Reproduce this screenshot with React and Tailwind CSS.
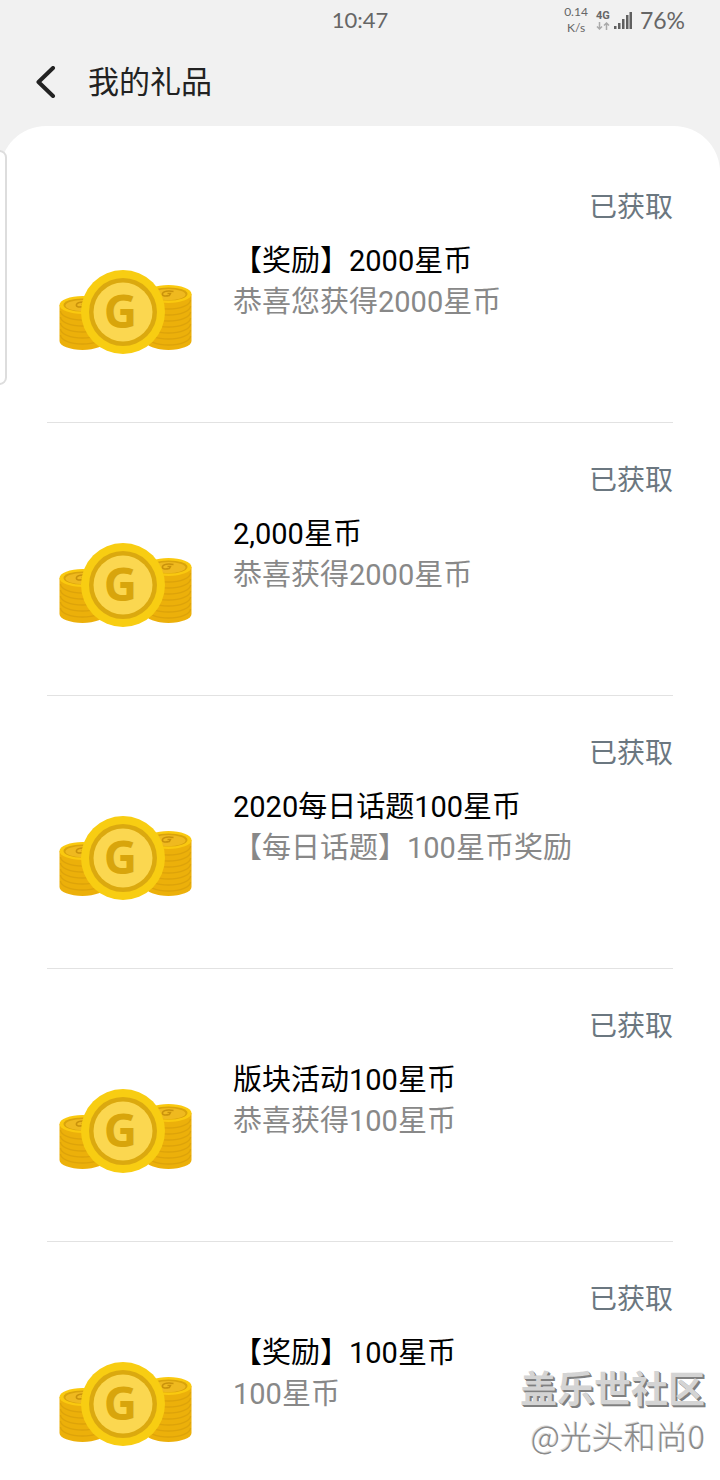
const gifts = [
  { title: '【奖励】2000星币', note: '恭喜您获得2000星币' },
  { title: '2,000星币', note: '恭喜获得2000星币' },
  { title: '2020每日话题100星币', note: '【每日话题】100星币奖励' },
  { title: '版块活动100星币', note: '恭喜获得100星币' },
  { title: '【奖励】100星币', note: '100星币' },
];

function Stack({ cx, top, bottom, lines }) {
  const l = cx - 23;
  const r = cx + 23;
  return (
    <g>
      <path d={`M${l} ${top}V${bottom}A23 9 0 0 0 ${r} ${bottom}V${top}Z`} fill="#ecb00a" />
      {lines.map((y) => (
        <path key={y} d={`M${l + 1} ${y}A22 9 0 0 0 ${r - 1} ${y}`} fill="none" stroke="#dda30a" strokeWidth="1.3" />
      ))}
      <ellipse cx={cx} cy={top} rx="23" ry="9" fill="#fac90f" />
      <ellipse cx={cx} cy={top} rx="19" ry="6.6" fill="#d9a30c" />
      <ellipse cx={cx} cy={top + 0.6} rx="17" ry="5.6" fill="#efb91f" />
      <path
        d={`M${cx + 5} ${top - 2.6}q-9 -1.4 -11 2q-1 3.600 7 2l1 -2h-3`}
        fill="none"
        stroke="#c9920b"
        strokeWidth="1.5"
      />
    </g>
  );
}

function Coins() {
  return (
    <svg className="h-[84px] w-[134px] shrink-0" viewBox="0 0 134 84" aria-hidden="true">
      <Stack cx={23.500} top={35} bottom={71} lines={[41, 47, 53, 59, 65]} />
      <Stack cx={109.500} top={24} bottom={71} lines={[30, 36, 42, 48, 54, 60, 66]} />
      <circle cx="64" cy="42" r="42" fill="#f8cd12" />
      <circle cx="64" cy="42" r="34" fill="#dba90f" />
      <circle cx="64" cy="42" r="29.500" fill="#fbd750" />
      <text x="61.500" y="58" textAnchor="middle" className="fill-[#d8a50c] font-['Open_Sans',sans-serif] text-[46px] font-bold">
        G
      </text>
    </svg>
  );
}

function StatusBar() {
  return (
    <div className="grid h-10 grid-cols-[1fr_auto_1fr] items-center px-[35px] font-['Lato',sans-serif] text-[#666666]">
      <span className="col-start-2 text-center text-[22px] leading-10">10:47</span>
      <div className="flex items-center justify-end gap-2">
        <div className="text-center text-[12px] leading-4">
          <div>0.14</div>
          <div>K/s</div>
        </div>
        <div className="flex items-center gap-1">
          <div className="flex flex-col items-center">
            <span className="font-['Roboto',sans-serif] text-[11px] leading-[12px] font-bold">4G</span>
            <svg className="h-2 w-[14px]" viewBox="0 0 14 8" fill="none" stroke="#aaaaaa" strokeWidth="1.5" aria-hidden="true">
              <path d="M3.500 0V7M1 4.500l2.500 2.500 2.500-2.500M10.500 8V1M8 3.500l2.500-2.500 2.500 2.500" />
            </svg>
          </div>
          <svg className="h-[18px] w-[18px]" viewBox="0 0 18 18" fill="#606060" aria-hidden="true">
            <path d="M0 15h2.500v3H0zM4 12h2.500v6H4zM8 8h2.500v10H8zM12 4h2.500v14H12zM15.500 1H18v17h-2.500z" />
          </svg>
          <span className="pl-1 text-[23px] leading-10">76%</span>
        </div>
      </div>
    </div>
  );
}

export default function App() {
  return (
    <div className="relative flex h-screen flex-col overflow-hidden bg-[#f1f1f1] font-['Roboto','Noto_Sans_CJK_SC',sans-serif]">
      <StatusBar />
      <header className="flex h-[86px] shrink-0 items-center gap-8 pl-[34px]">
        <button type="button" aria-label="返回">
          <svg className="mb-[2px] h-8 w-[22px]" viewBox="0 0 22 32" fill="none" stroke="#222222" strokeWidth="4" strokeLinecap="round" strokeLinejoin="round" aria-hidden="true">
            <path d="M19 2L4.500 16L19 30" />
          </svg>
        </button>
        <h1 className="text-[31px] leading-10 text-[#222222]">我的礼品</h1>
      </header>
      <main className="min-h-0 flex-1 overflow-hidden rounded-t-[46px] bg-white px-[47px] pt-6">
        <ul>
          {gifts.map((gift) => (
            <li key={gift.title} className="border-b border-[#e2e2e2] pt-[38px] pb-[68px]">
              <p className="text-right text-[28px] leading-10 text-[#6b7780]">已获取</p>
              <div className="flex gap-10 pl-3">
                <div className="flex pt-[42px]">
                  <Coins />
                </div>
                <div className="min-w-0 pt-[13px] text-[29px] leading-[41px]">
                  <h2 className="text-black">{gift.title}</h2>
                  <p className="text-[#888888]">{gift.note}</p>
                </div>
              </div>
            </li>
          ))}
        </ul>
      </main>
      <div className="absolute top-[150px] -left-2 h-[235px] w-[15px] rounded-lg border-2 border-[#dddddd] bg-white" />
      <div className="absolute right-[15px] bottom-[22px] text-right font-['Noto_Sans_CJK_SC',sans-serif]">
        <p className="text-[37px] leading-[50px] font-bold text-[#d4d4d4] [text-shadow:1px_1px_0_#808080,2px_2px_0_#808080]">盖乐世社区</p>
        <p className="text-[32px] leading-[46px] font-light text-[#8a8a8a] [text-shadow:-1px_-1px_0_#dddddd]">@光头和尚0</p>
      </div>
    </div>
  );
}
